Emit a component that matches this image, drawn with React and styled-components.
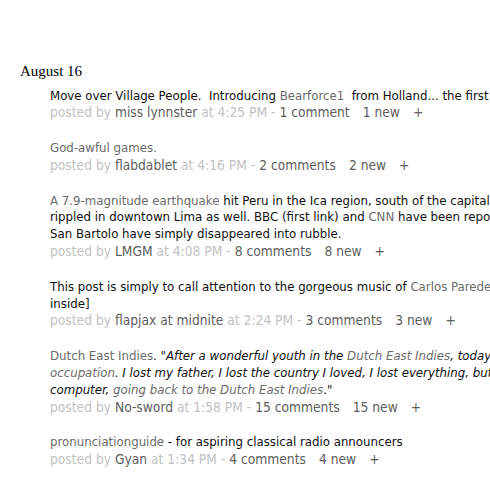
import React from 'react';
import styled, { createGlobalStyle } from 'styled-components';

const GlobalStyle = createGlobalStyle`
  html, body {
    margin: 0;
    padding: 0;
    background: #fff;
    overflow: hidden;
  }
  body {
    font-family: "DejaVu Sans Condensed", "Liberation Sans", sans-serif;
  }
`;

const Page = styled.div`
  width: 1000px;
  padding: 62px 0 0 20px;
`;

const DayTitle = styled.h2`
  margin: 0 0 7.5px;
  font-family: "Liberation Serif", serif;
  font-weight: normal;
  font-size: 15px;
  line-height: 18px;
  color: #000;
`;

const PostList = styled.div`
  padding-left: 30px;
`;

const Post = styled.div`
  font-size: 13.1px;
  line-height: 16.8px;
  color: #111;
  margin-bottom: 19px;
`;

const Quote = styled.span`
  font-style: italic;
`;

const PostLink = styled.a`
  color: #6b6b6b;
  text-decoration: none;
  font-style: ${({ $italic }) => ($italic ? 'italic' : 'inherit')};
`;

const Byline = styled.div`
  font-size: 13.7px;
  color: #c2c2c2;
`;

const Author = styled.a`
  color: #5e5e5e;
  text-decoration: none;
`;

const Count = styled.a`
  color: #5e5e5e;
  text-decoration: none;
  margin-left: ${({ $gap }) => ($gap ? '13px' : '0')};
`;

const posts = [
  {
    body: (
      <>
        Move over Village People.&nbsp; Introducing <PostLink href="#">Bearforce1</PostLink>&nbsp; from Holland... the first gay boy band to hit the charts with a wink and a beard.
      </>
    ),
    user: 'miss lynnster',
    time: '4:25 PM',
    comments: 1,
  },
  {
    body: <PostLink href="#">God-awful games.</PostLink>,
    user: 'flabdablet',
    time: '4:16 PM',
    comments: 2,
  },
  {
    body: (
      <>
        <PostLink href="#">A 7.9-magnitude earthquake</PostLink> hit Peru in the Ica region, south of the capital, and the shaking was felt and
        <br />
        rippled in downtown Lima as well. BBC (first link) and <PostLink href="#">CNN</PostLink> have been reporting that towns like Pisco and
        <br />
        San Bartolo have simply disappeared into rubble.
      </>
    ),
    user: 'LMGM',
    time: '4:08 PM',
    comments: 8,
  },
  {
    body: (
      <>
        This post is simply to call attention to the gorgeous music of <PostLink href="#">Carlos Paredes</PostLink>. [more
        <br />
        inside]
      </>
    ),
    user: 'flapjax at midnite',
    time: '2:24 PM',
    comments: 3,
  },
  {
    body: (
      <>
        <PostLink href="#">Dutch East Indies</PostLink>. <Quote>"After a wonderful youth in the <PostLink href="#" $italic>Dutch East Indies</PostLink>, today I look back on the war and the
        <br />
        <PostLink href="#" $italic>occupation</PostLink>. I lost my father, I lost the country I loved, I lost everything, but now I sit behind my
        <br />
        computer, <PostLink href="#" $italic>going back to the Dutch East Indies</PostLink></Quote>."
      </>
    ),
    user: 'No-sword',
    time: '1:58 PM',
    comments: 15,
  },
  {
    body: (
      <>
        <PostLink href="#">pronunciationguide</PostLink> - for aspiring classical radio announcers
      </>
    ),
    user: 'Gyan',
    time: '1:34 PM',
    comments: 4,
  },
];

const App = () => (
  <>
    <GlobalStyle />
    <Page>
      <DayTitle>August 16</DayTitle>
      <PostList>
        {posts.map((post) => (
          <Post key={post.user}>
            {post.body}
            <Byline>
              posted by <Author href="#">{post.user}</Author> at {post.time} -{' '}
              <Count href="#">
                {post.comments} {post.comments === 1 ? 'comment' : 'comments'}
              </Count>
              <Count href="#" $gap>
                {post.comments} new
              </Count>
              <Count href="#" $gap>
                +
              </Count>
            </Byline>
          </Post>
        ))}
      </PostList>
    </Page>
  </>
);

export default App;
